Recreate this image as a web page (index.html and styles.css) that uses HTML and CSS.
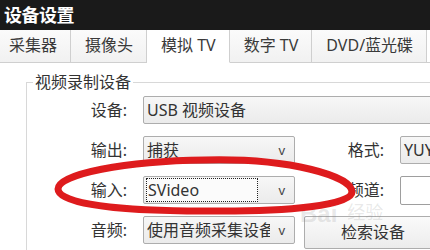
FILE: index.html
```html
<!DOCTYPE html>
<html lang="zh-CN">
<head>
<meta charset="utf-8">
<title>设备设置</title>
<link rel="stylesheet" href="styles.css">
</head>
<body>
<div class="win">
  <div class="titlebar">设备设置</div>
  <div class="tabs">
    <div class="tab">采集器</div>
    <div class="tab">摄像头</div>
    <div class="tab active">模拟 TV</div>
    <div class="tab">数字 TV</div>
    <div class="tab">DVD/蓝光碟</div>
    <div class="tab-fill"></div>
  </div>
  <div class="page">
    <fieldset class="group">
      <legend>视频录制设备</legend>
      <div class="form">
        <div class="lbl">设备:</div>
        <div class="field full">USB 视频设备</div>

        <div class="lbl">输出:</div>
        <div class="combo"><span class="val">捕获</span><span class="arrow">v</span></div>
        <div class="lbl">格式:</div>
        <div class="field">YUY2</div>

        <div class="lbl">输入:</div>
        <div class="combo focus"><span class="val dotted">SVideo</span><span class="arrow">v</span></div>
        <div class="lbl">频道:</div>
        <div class="field edit"></div>

        <div class="lbl">音频:</div>
        <div class="combo"><span class="val clip">使用音频采集设备</span><span class="arrow">v</span></div>
        <div class="button">检索设备</div>
      </div>
    </fieldset>
  </div>
  <div class="watermark"><span class="wm-bai">Bai</span><span class="wm-jy">经验</span></div>
  <svg class="mark" width="430" height="250" viewBox="0 0 430 250">
    <path d="M 205 160 C 290 158 352 176 352 192 C 352 205 290 212 205 211 C 120 211 58 204 58 189 C 58 174 125 161 205 160 Z" fill="none" stroke="#de1b1d" stroke-width="7"/>
  </svg>
</div>
</body>
</html>
```
FILE: styles.css
```css
html, body {
  margin: 0;
  padding: 0;
  background: #ffffff;
}
body {
  font-family: "Noto Sans", "Noto Sans CJK SC", sans-serif;
  color: #333333;
}
.win {
  position: relative;
  width: 430px;
  height: 250px;
  overflow: hidden;
  background: #ffffff;
}
.titlebar {
  height: 30px;
  background: #1a1a1a;
  color: #ffffff;
  font-family: "Noto Sans CJK SC", sans-serif;
  font-weight: 700;
  font-size: 18px;
  line-height: 29px;
  padding-left: 4px;
  letter-spacing: -0.5px;
}
.tabs {
  display: flex;
  height: 33px;
  margin-left: -6px;
  width: 460px;
}
.tab {
  box-sizing: border-box;
  height: 33px;
  padding: 0 13px 0 14px;
  border: 1px solid #cfcfcf;
  border-top: none;
  border-left: none;
  background: linear-gradient(#fbfbfb, #f1f1f1);
  font-family: "Noto Sans", "Noto Sans CJK SC", sans-serif;
  font-size: 16px;
  line-height: 31px;
  color: #3a3a3a;
  white-space: nowrap;
}
.tab:first-child {
  border-left: 1px solid #cfcfcf;
}
.tab.active {
  background: #ffffff;
  border-bottom-color: #ffffff;
  color: #3a3a3a;
}
.tab-fill {
  flex: 1;
  border-bottom: 1px solid #cfcfcf;
}
.page {
  padding: 9px 0 0 26px;
}
.group {
  margin: 0;
  padding: 0;
  width: 460px;
  height: 200px;
  border: 1px solid #d8d8d8;
  border-right: none;
  border-bottom: none;
  min-inline-size: 0;
}
.group legend {
  margin-left: 6px;
  padding: 0 2px;
  font-size: 16px;
  line-height: 20px;
  color: #333333;
}
.form {
  display: grid;
  grid-template-columns: 101px 152px 75px 38px;
  grid-auto-rows: 28px;
  column-gap: 15px;
  row-gap: 12px;
  padding-top: 4px;
  align-items: center;
}
.lbl {
  text-align: right;
  font-size: 16px;
  line-height: 28px;
  color: #333333;
  padding-right: 1px;
  white-space: nowrap;
}
.field, .combo {
  box-sizing: border-box;
  height: 28px;
  border: 1px solid #adadad;
  border-radius: 2px;
  background: linear-gradient(#f7f7f7, #ebebeb);
  font-size: 16px;
  line-height: 26px;
  padding-left: 3px;
  color: #333333;
  white-space: nowrap;
  overflow: hidden;
}
.field.full {
  grid-column: 2 / 5;
}
.field.edit {
  background: #ffffff;
  height: 29px;
  border-color: #9e9e9e;
}
.combo {
  display: flex;
  align-items: center;
  padding-right: 9px;
}
.combo .val {
  flex: 1;
  overflow: hidden;
  white-space: nowrap;
}
.combo .val.clip {
  margin-right: 8px;
}
.combo .val.dotted {
  box-sizing: border-box;
  height: 24px;
  line-height: 22px;
  border: 1px dotted #222222;
  margin-right: 20px;
  padding-left: 1px;
  margin-left: -1px;
  background: #fbfbfb;
}
.combo .arrow {
  font-size: 13px;
  color: #444444;
  line-height: 26px;
}
.button {
  grid-column: 3 / 5;
  margin-left: -6px;
  align-self: start;
  box-sizing: border-box;
  height: 33px;
  width: 140px;
  border: 1px solid #adadad;
  border-radius: 2px;
  background: linear-gradient(#fafafa, #ececec);
  font-size: 16px;
  line-height: 31px;
  padding-left: 36px;
  color: #333333;
  white-space: nowrap;
}
.watermark {
  position: absolute;
  left: 300px;
  top: 200px;
  display: flex;
  align-items: flex-start;
  gap: 10px;
  color: rgba(140, 140, 140, 0.2);
  pointer-events: none;
}
.wm-bai {
  font-family: "Liberation Sans", sans-serif;
  font-size: 24px;
  font-weight: 700;
  line-height: 28px;
}
.wm-jy {
  font-family: "Noto Sans CJK SC", sans-serif;
  font-size: 18px;
  line-height: 22px;
}
.mark {
  position: absolute;
  left: 0;
  top: 0;
  pointer-events: none;
}
```
